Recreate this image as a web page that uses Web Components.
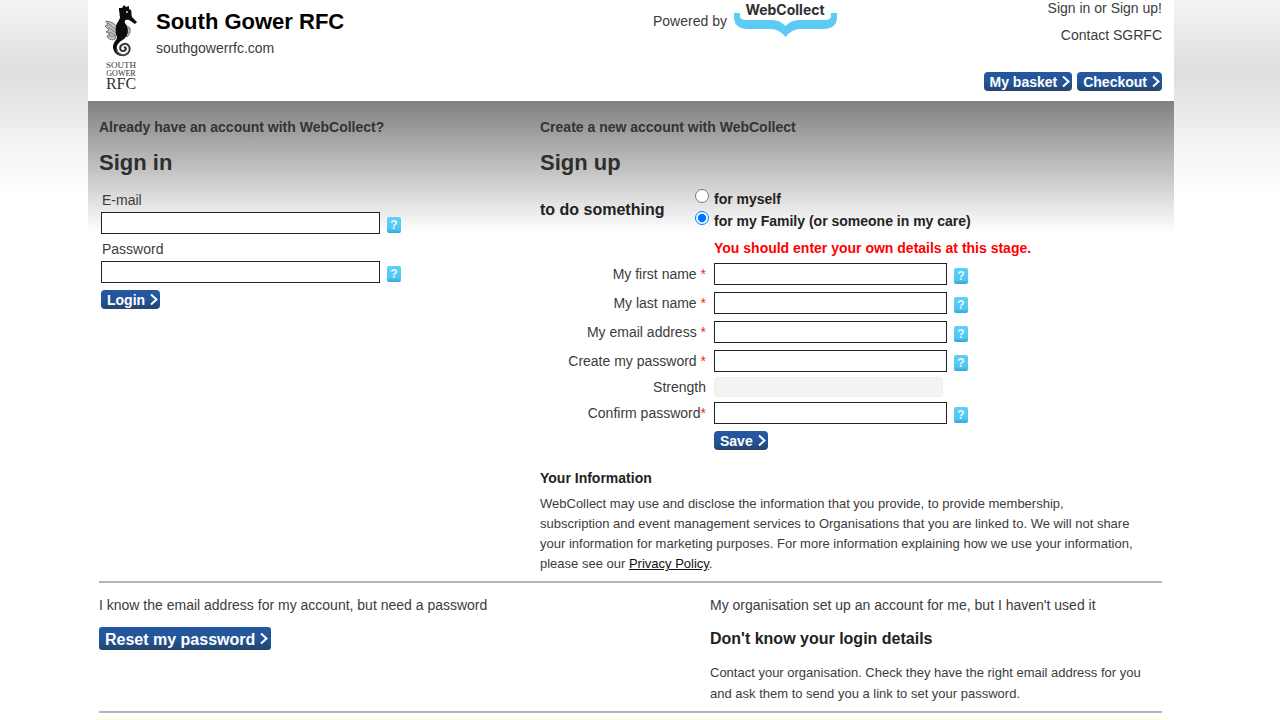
<!DOCTYPE html>
<html lang="en">
<head>
<meta charset="utf-8">
<meta name="viewport" content="width=device-width, initial-scale=1">
<title>South Gower RFC - Sign in</title>
<style>
    body {
        margin: 0;
        padding: 0 18px 0 0;
        font: 14px/21px "Liberation Sans", Arial, sans-serif;
        color: #3c3c3c;
        background: #fff linear-gradient(180deg, #f4f4f4 0, #dedede 74px, #f2f2f2 140px, #fff 192px) no-repeat;
    }
</style>
</head>
<body>
<account-page></account-page>

<script>
// Blue button with a chevron
class ActionButton extends HTMLElement {
    constructor() {
        super();
        this.attachShadow({ mode: 'open' });
    }

    connectedCallback() {
        this.shadowRoot.innerHTML = `
            <style>
                :host { display: inline-block; }

                button {
                    display: flex;
                    align-items: center;
                    gap: 5px;
                    height: 19px;
                    padding: 2px 2px 0 6px;
                    border: none;
                    border-radius: 4px;
                    background: linear-gradient(180deg, #25599f 0%, #22549a 55%, #274468 100%);
                    color: #fff;
                    font: bold 14px/19px "Liberation Sans", Arial, sans-serif;
                    white-space: nowrap;
                    cursor: pointer;
                }

                svg { display: block; margin-bottom: 3px; }

                :host([size="large"]) button {
                    height: 23px;
                    padding-right: 3px;
                    border-radius: 3px;
                    font-size: 16px;
                    line-height: 23px;
                }
            </style>
            <button type="button">
                <slot></slot>
                <svg width="8" height="13" viewBox="0 0 8 13" fill="none" stroke="#fff" stroke-width="2" aria-hidden="true">
                    <path d="M1 1.5L6.5 6.5L1 11.5"/>
                </svg>
            </button>
        `;
    }
}

// Small light blue question mark
class HelpTip extends HTMLElement {
    constructor() {
        super();
        this.attachShadow({ mode: 'open' });
    }

    connectedCallback() {
        this.shadowRoot.innerHTML = `
            <style>
                :host { display: block; }

                button {
                    display: block;
                    width: 14px;
                    height: 16px;
                    padding: 0;
                    border: none;
                    border-radius: 2px;
                    background: linear-gradient(180deg, #5fd0f8 0%, #52c6f2 75%, #2fa6d6 100%);
                    color: #e6f9ff;
                    font: bold 12px/16px "Liberation Sans", Arial, sans-serif;
                    text-align: center;
                    cursor: help;
                }
            </style>
            <button type="button" aria-label="Help">?</button>
        `;
    }
}

// Label, text box and help. The "side" layout puts the label to the left.
class FormField extends HTMLElement {
    constructor() {
        super();
        this.attachShadow({ mode: 'open' });
    }

    connectedCallback() {
        const type = this.getAttribute('type') || 'text';
        const star = this.hasAttribute('required') ? '<span class="star">*</span>' : '';
        this.shadowRoot.innerHTML = `
            <style>
                :host { display: block; }

                label { display: block; padding: 0 0 1px 1px; }

                .control {
                    display: flex;
                    align-items: center;
                    gap: 7px;
                }

                input {
                    box-sizing: border-box;
                    width: 279px;
                    height: 22px;
                    border: 1px solid #222;
                    padding: 1px 4px;
                    background: #fff;
                    font: inherit;
                }

                help-tip { padding-top: 3px; margin-bottom: -1px; }

                .star { color: #f22; }

                :host([layout="side"]) {
                    display: grid;
                    grid-template-columns: 166px 1fr;
                    column-gap: 8px;
                    align-items: center;
                }

                :host([layout="side"]) label { padding: 0; text-align: right; }
                :host([layout="side"]) input { width: 233px; }
            </style>
            <label for="field"><slot></slot>${star}</label>
            <div class="control">
                <input id="field" type="${type}">
                <help-tip></help-tip>
            </div>
        `;
    }
}

// Seahorse badge of the club
class ClubLogo extends HTMLElement {
    constructor() {
        super();
        this.attachShadow({ mode: 'open' });
    }

    connectedCallback() {
        this.shadowRoot.innerHTML = `
            <style>
                :host { display: block; }
                svg { display: block; }
                text {
                    font-family: "Liberation Serif", "Times New Roman", serif;
                    fill: #333;
                    text-anchor: middle;
                }
            </style>
            <svg width="34" height="86" viewBox="0 0 34 86" role="img" aria-label="South Gower RFC">
                <g fill="#c4c4c4" stroke="#555" stroke-width=".8">
                    <path d="M2 16C8 17 12 19 14 24L11 34C8 36 4 34 3 31L6 29L2 27L5 25L1 21L4 20Z"/>
                    <path d="M22 21C27 21 28 27 23 32L20 28Z"/>
                </g>
                <path d="M4 18L13 26M4 22L12 28M5 27L12 30M5 31L11 31M22 24L26 24M22 28L25 27" fill="none" stroke="#666" stroke-width=".8"/>
                <path fill="#0c0c0c" d="M15 3L18 3L20 0L22 2L25 1L25 4L27 5C28 8 27 10 28 12L33 17L31 19L25 15C22 14 20 15 21 18C25 23 25 30 20 34C15 37 12 40 13 44C14 48 17 50 20 50L19 51C12 51 9 46 9 42C9 37 13 35 13 32C12 29 11 26 12 21C13 17 16 15 16 12C15 9 16 8 15 6Z"/>
                <circle cx="23" cy="7" r=".9" fill="#eee"/>
                <path d="M12 44C13 50 20 52 24 48C28 43 24 38 20 39C15 40 15 46 19 46C22 46 23 43 20 42" fill="none" stroke="#333" stroke-width="2"/>
                <path d="M13 46C16 51 21 51 24 47C26 43 23 39 20 40" fill="none" stroke="#aaa" stroke-width=".7" stroke-dasharray="1 1"/>
                <text x="17" y="63" font-size="9">SOUTH</text>
                <text x="17" y="71" font-size="8">GOWER</text>
                <text x="17" y="84" font-size="16">RFC</text>
            </svg>
        `;
    }
}

class WebcollectLogo extends HTMLElement {
    constructor() {
        super();
        this.attachShadow({ mode: 'open' });
    }

    connectedCallback() {
        this.shadowRoot.innerHTML = `
            <style>
                :host { display: block; }
                svg { display: block; }
                text { font: bold 14px Inter, "Liberation Sans", sans-serif; fill: #303030; text-anchor: middle; }
            </style>
            <svg width="104" height="37" viewBox="0 0 104 37" role="img" aria-label="WebCollect">
                <path fill="#5bcaf5" d="M0 13H6V16Q6 20 12 20H38Q46 20 51.5 26Q57 20 65 20H91Q97 20 97 16V13H103V17Q103 29 89 29H66Q58 29 51.5 37Q45 29 37 29H14Q0 29 0 17Z"/>
                <text x="51" y="15">WebCollect</text>
            </svg>
        `;
    }
}

class SiteHeader extends HTMLElement {
    constructor() {
        super();
        this.attachShadow({ mode: 'open' });
    }

    connectedCallback() {
        this.shadowRoot.innerHTML = `
            <style>
                :host { display: block; background: #fff; }

                header {
                    display: grid;
                    grid-template-columns: 549fr 200fr 309fr;
                    align-items: start;
                    min-height: 101px;
                    padding: 0 12px 0 16px;
                    box-sizing: border-box;
                }

                .club { display: flex; gap: 18px; padding-top: 5px; }
                h1 { margin: 4px 0 0; font-size: 22px; line-height: 26px; color: #000; }
                .club p { margin: 3px 0 0; }

                .powered { display: flex; gap: 7px; }
                .powered span { padding-top: 11px; }

                nav {
                    display: flex;
                    flex-direction: column;
                    align-items: flex-end;
                    gap: 10px;
                }
                nav a { color: inherit; text-decoration: none; line-height: 17px; }
                .shop { display: flex; gap: 5px; padding-top: 18px; }
            </style>
            <header>
                <div class="club">
                    <club-logo></club-logo>
                    <div>
                        <h1>South Gower RFC</h1>
                        <p>southgowerrfc.com</p>
                    </div>
                </div>
                <div class="powered">
                    <span>Powered by</span>
                    <webcollect-logo></webcollect-logo>
                </div>
                <nav>
                    <a href="#signin">Sign in or Sign up!</a>
                    <a href="#contact">Contact SGRFC</a>
                    <div class="shop">
                        <action-button>My basket</action-button>
                        <action-button>Checkout</action-button>
                    </div>
                </nav>
            </header>
        `;
    }
}

class SignIn extends HTMLElement {
    constructor() {
        super();
        this.attachShadow({ mode: 'open' });
    }

    connectedCallback() {
        this.shadowRoot.innerHTML = `
            <style>
                :host { display: block; }
                h2 { margin: 10px 0 12px; font-size: 22px; line-height: 30px; color: #2e2e2e; }
                .lead { margin: 0; font-weight: bold; color: #333; }
                form {
                    display: flex;
                    flex-direction: column;
                    align-items: flex-start;
                    gap: 5px;
                    padding-left: 2px;
                }
                action-button { margin-top: 2px; }
            </style>
            <p class="lead">Already have an account with WebCollect?</p>
            <h2>Sign in</h2>
            <form>
                <form-field type="email">E-mail</form-field>
                <form-field type="password">Password</form-field>
                <action-button>Login</action-button>
            </form>
        `;
    }
}

class SignUp extends HTMLElement {
    constructor() {
        super();
        this.attachShadow({ mode: 'open' });
    }

    connectedCallback() {
        this.shadowRoot.innerHTML = `
            <style>
                :host { display: block; }
                h2 { margin: 10px 0 9px; font-size: 22px; line-height: 30px; color: #2e2e2e; }
                .lead { margin: 0; font-weight: bold; color: #333; }

                fieldset {
                    display: grid;
                    grid-template-columns: 155px 1fr;
                    align-items: center;
                    margin: 0;
                    padding: 0;
                    border: none;
                    color: #222;
                }
                .purpose { font-size: 16px; font-weight: bold; }
                .choice {
                    display: flex;
                    gap: 5px;
                    height: 22px;
                    font-weight: bold;
                    line-height: 24px;
                }
                .choice input { width: 14px; height: 14px; margin: 2px 0 0; }

                .warning { margin: 7px 0 4px 174px; font-weight: bold; color: #f00; }

                .fields { display: flex; flex-direction: column; gap: 7px; }
                .strength {
                    display: grid;
                    grid-template-columns: 166px 229px;
                    column-gap: 8px;
                    text-align: right;
                    margin: 5px 0;
                    line-height: 20px;
                }
                .meter {
                    border-radius: 4px;
                    background: #f3f3f3;
                    border: 1px solid #eee;
                    box-sizing: border-box;
                }
                .save { display: block; margin: 7px 0 0 174px; }

                h3 { margin: 18px 0 5px; font-size: 14px; line-height: 21px; color: #222; }
                .info { max-width: 596px; margin: 0; font-size: 13px; line-height: 20px; }
                .info a { color: #111; }
            </style>
            <p class="lead">Create a new account with WebCollect</p>
            <h2>Sign up</h2>
            <form>
                <fieldset>
                    <div class="purpose">to do something</div>
                    <div>
                        <label class="choice"><input type="radio" name="who">for myself</label>
                        <label class="choice"><input type="radio" name="who" checked>for my Family (or someone in my care)</label>
                    </div>
                </fieldset>
                <p class="warning">You should enter your own details at this stage.</p>
                <div class="fields">
                    <form-field layout="side" required>My first name </form-field>
                    <form-field layout="side" required>My last name </form-field>
                    <form-field layout="side" type="email" required>My email address </form-field>
                    <form-field layout="side" type="password" required>Create my password </form-field>
                </div>
                <div class="strength">
                    <span>Strength</span>
                    <div class="meter"></div>
                </div>
                <form-field layout="side" type="password" required>Confirm password</form-field>
                <action-button class="save">Save</action-button>
            </form>
            <h3>Your Information</h3>
            <p class="info">WebCollect may use and disclose the information that you provide, to provide membership, subscription and event management services to Organisations that you are linked to. We will not share your information for marketing purposes. For more information explaining how we use your information, please see our <a href="#privacy">Privacy Policy</a>.</p>
        `;
    }
}

class AccountHelp extends HTMLElement {
    constructor() {
        super();
        this.attachShadow({ mode: 'open' });
    }

    connectedCallback() {
        this.shadowRoot.innerHTML = `
            <style>
                :host {
                    display: grid;
                    grid-template-columns: 611fr 452fr;
                    padding: 12px 0 7px;
                }
                p { margin: 0; }
                action-button { margin-top: 11px; }
                h3 { margin: 12px 0 13px; font-size: 16px; line-height: 21px; color: #222; }
                .contact { max-width: 436px; font-size: 13px; }
            </style>
            <div>
                <p>I know the email address for my account, but need a password</p>
                <action-button size="large">Reset my password</action-button>
            </div>
            <div>
                <p>My organisation set up an account for me, but I haven't used it</p>
                <h3>Don't know your login details</h3>
                <p class="contact">Contact your organisation. Check they have the right email address for you and ask them to send you a link to set your password.</p>
            </div>
        `;
    }
}

class AccountPage extends HTMLElement {
    constructor() {
        super();
        this.attachShadow({ mode: 'open' });
    }

    connectedCallback() {
        this.shadowRoot.innerHTML = `
            <style>
                :host {
                    display: block;
                    max-width: 1086px;
                    margin: 0 auto;
                    background: #fff;
                }
                main {
                    padding: 16px 12px 0 11px;
                    background: linear-gradient(180deg, #808080 0, #fff 132px) no-repeat;
                }
                .accounts {
                    display: grid;
                    grid-template-columns: 441fr 622fr;
                    padding-bottom: 7px;
                }
                hr { margin: 0; border: none; border-top: 2px solid #b4b4b4; }
                .notice { height: 1px; margin-top: 6px; background: #ffffc0; }
            </style>
            <site-header></site-header>
            <main>
                <div class="accounts">
                    <sign-in></sign-in>
                    <sign-up></sign-up>
                </div>
                <hr>
                <account-help></account-help>
                <hr>
                <div class="notice"></div>
            </main>
        `;
    }
}

customElements.define('action-button', ActionButton);
customElements.define('help-tip', HelpTip);
customElements.define('form-field', FormField);
customElements.define('club-logo', ClubLogo);
customElements.define('webcollect-logo', WebcollectLogo);
customElements.define('site-header', SiteHeader);
customElements.define('sign-in', SignIn);
customElements.define('sign-up', SignUp);
customElements.define('account-help', AccountHelp);
customElements.define('account-page', AccountPage);
</script>
</body>
</html>
